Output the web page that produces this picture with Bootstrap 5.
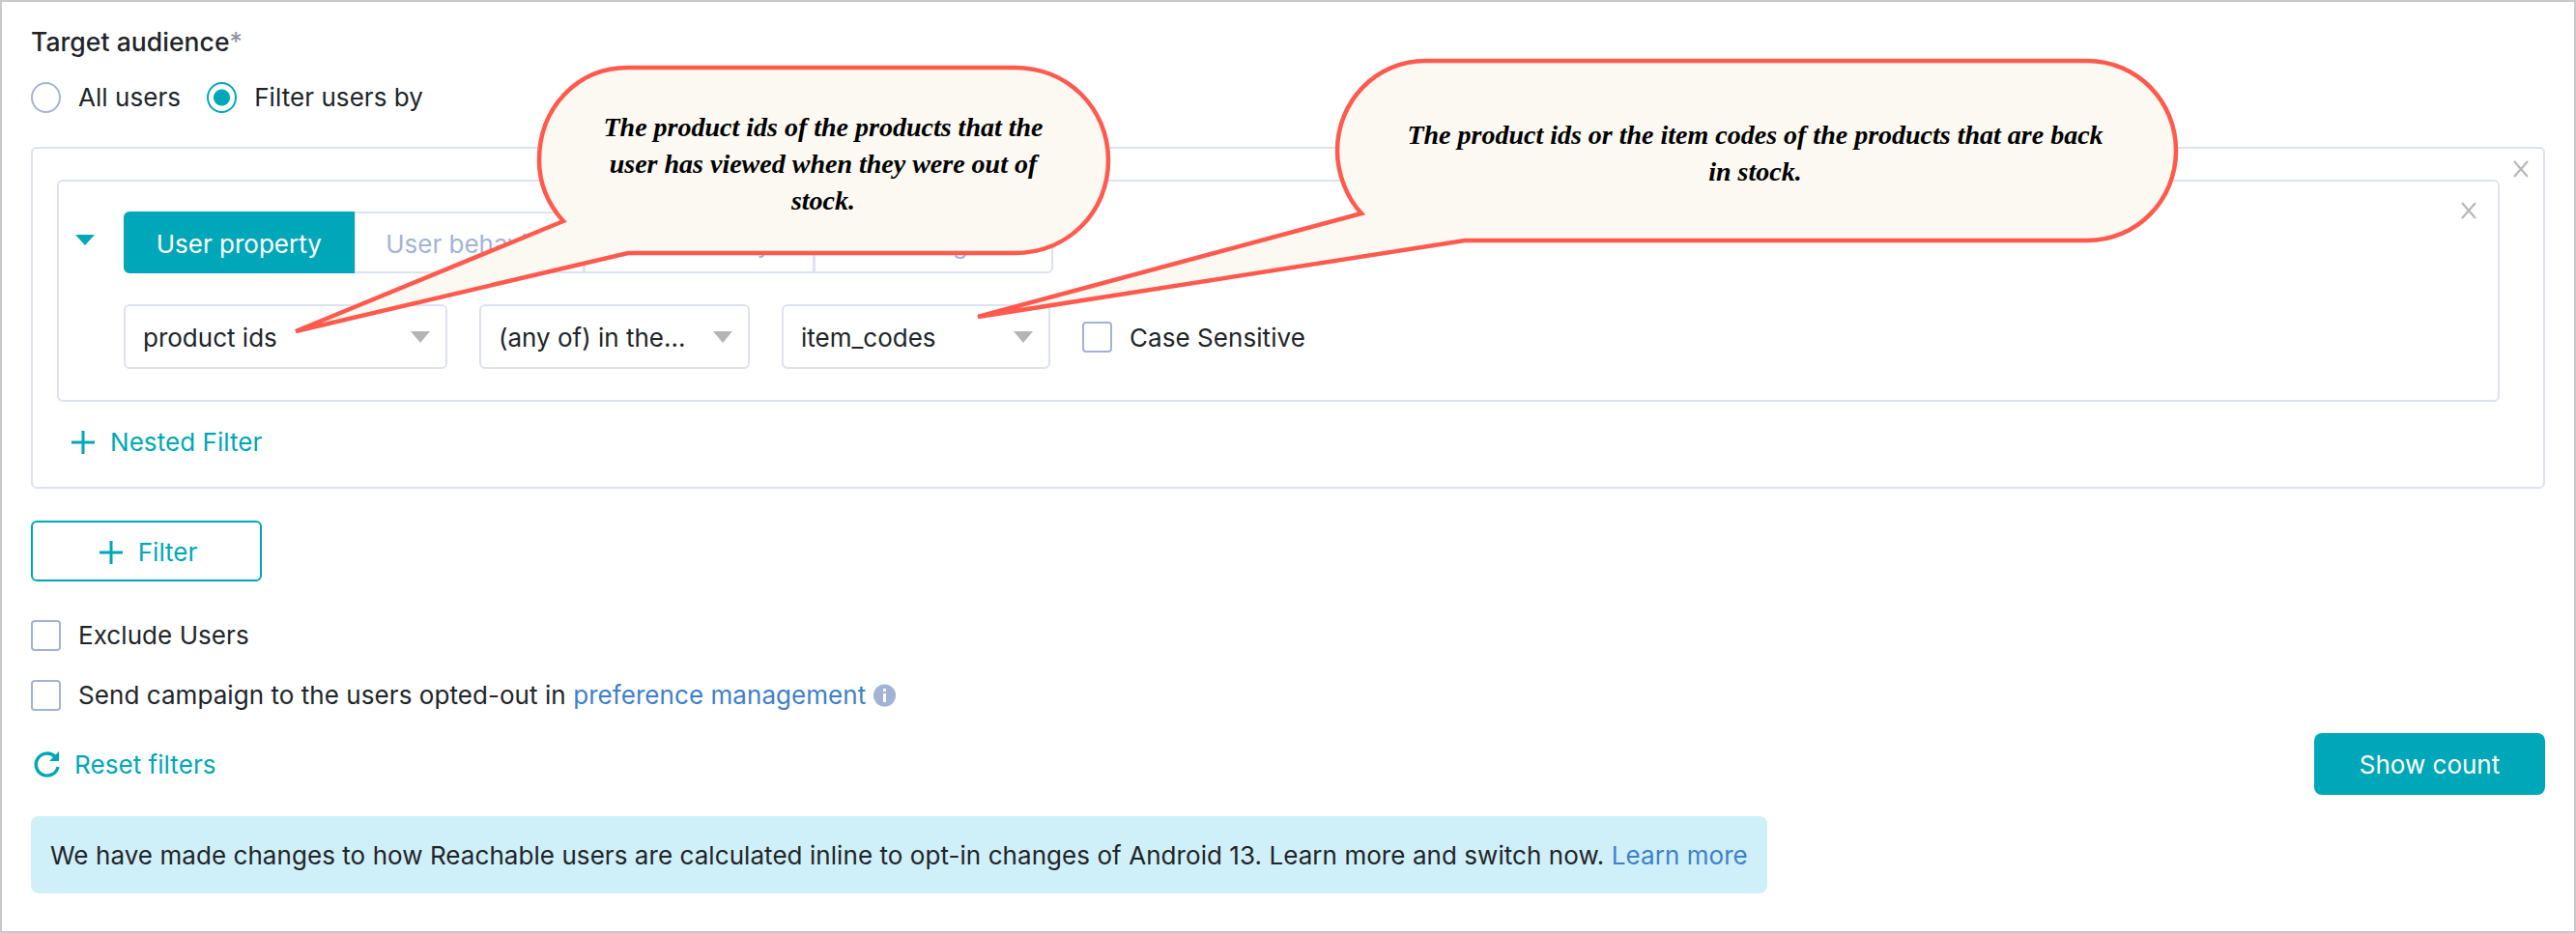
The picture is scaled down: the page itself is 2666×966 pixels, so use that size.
<!DOCTYPE html>
<html lang="en">
  <head>
    <meta charset="utf-8" />
    <meta name="viewport" content="width=device-width, initial-scale=1" />
    <title>Target audience</title>
    <link
      href="https://cdn.jsdelivr.net/npm/bootstrap@5.3.3/dist/css/bootstrap.min.css"
      rel="stylesheet"
    />
    <style>
      body {
        font-family: "Inter", "Liberation Sans", sans-serif;
        font-size: 26px;
        letter-spacing: 0.06px;
        color: #212529;
        background: #fff;
      }
      .page-frame {
        position: relative;
        height: 966px;
        border: 2px solid #c8c8c8;
        padding: 25px 30px 0;
        overflow: hidden;
      }
      .audience-title {
        font-size: 26.5px;
        line-height: 32px;
        font-weight: 500;
      }
      .audience-title span {
        color: #8a8f99;
        font-weight: 400;
      }
      .line-row {
        height: 32px;
        line-height: 32px;
      }
      .all-users-label {
        margin-right: 27px;
      }
      .form-check-input.aud-check {
        width: 31px;
        height: 32px;
        margin: 0 18px 0 0;
        flex: none;
        border: 2px solid #a3b3d6;
        background-color: #fff;
      }
      .form-check-input.aud-check[type="checkbox"] {
        border-radius: 4px;
      }
      .form-check-input.aud-check:checked {
        border-color: #00a7b8;
        background-image: radial-gradient(circle, #00a7b8 0 8px, transparent 9px);
      }
      .filter-box {
        position: relative;
        border: 2px solid #dde1f0;
        border-radius: 6px;
      }
      .filter-outer {
        height: 354px;
        margin-top: 35px;
        padding: 32px 45px 0 25px;
      }
      .filter-inner {
        height: 230px;
        padding: 31px 0 0 67px;
      }
      .close-mark {
        position: absolute;
        width: 18px;
        height: 18px;
      }
      .close-outer {
        top: 12px;
        right: 14px;
      }
      .close-inner {
        top: 21px;
        right: 21px;
      }
      .rule-caret {
        position: absolute;
        left: 17px;
        top: 55px;
        width: 0;
        height: 0;
        border-left: 10px solid transparent;
        border-right: 10px solid transparent;
        border-top: 11px solid #00a7b8;
      }
      .seg-btn {
        height: 64px;
        font-size: 26px;
        color: #a3b3d6;
        border: 2px solid #dde1f0;
        border-radius: 6px;
        background: #fff;
        padding: 2px 0 0;
      }
      .seg-btn.active {
        color: #fff;
        background: #00a7b8;
        border-color: #00a7b8;
      }
      .aud-select {
        height: 67px;
        font-size: 26px;
        color: #212529;
        border: 2px solid #dde1f0;
        border-radius: 6px;
        padding: 2px 10px 0 18px;
        background-image: url("data:image/svg+xml,%3csvg xmlns='http://www.w3.org/2000/svg' viewBox='0 0 20 12'%3e%3cpath fill='%23b4b4b4' d='M0 0h20L10 12z'/%3e%3c/svg%3e");
        background-size: 20px 12px;
        background-position: right 16px center;
      }
      .teal-text {
        color: #00a7b8;
      }
      .nested-link {
        height: 32px;
        margin: 26px 0 0 15px;
        line-height: 32px;
      }
      .plus-mark {
        width: 24px;
        height: 24px;
        flex: none;
      }
      .add-filter {
        width: 239px;
        height: 63px;
        margin-top: 33px;
        padding: 2px 0 0 4px;
        font-size: 26px;
        color: #00a7b8;
        border: 2px solid #00a7b8;
        border-radius: 6px;
      }
      .show-count {
        width: 239px;
        height: 64px;
        font-size: 26px;
        color: #fff;
        background: #00a7b8;
        border: 0;
        border-radius: 8px;
      }
      .reach-note {
        width: 1797px;
        height: 80px;
        margin: 22px 0 0;
        padding: 0 20px;
        font-size: 26px;
        color: #212529;
        background: #d0f0f9;
        border: 0;
        border-radius: 8px;
      }
      .link-blue {
        color: #3f7fca;
        text-decoration: none;
      }
      .call-shapes {
        position: absolute;
        left: -2px;
        top: -2px;
        width: 2666px;
        height: 966px;
        pointer-events: none;
      }
      .call-note {
        position: absolute;
        font-family: "Liberation Serif", serif;
        font-size: 28px;
        font-weight: 700;
        font-style: italic;
        letter-spacing: 0;
        line-height: 38px;
        text-align: center;
        color: #000;
      }
      .call-a {
        left: 605px;
        top: 111px;
        width: 490px;
      }
      .call-b {
        left: 1442px;
        top: 119px;
        width: 745px;
      }
    </style>
  </head>
  <body>
    <div class="page-frame">
      <div class="audience-title">Target audience<span>*</span></div>

      <div class="d-flex align-items-center line-row" style="margin-top: 26px">
        <input class="form-check-input aud-check" type="radio" name="aud" />
        <span class="all-users-label">All users</span>
        <input class="form-check-input aud-check" type="radio" name="aud" checked />
        <span>Filter users by</span>
      </div>

      <div class="filter-box filter-outer">
        <svg class="close-mark close-outer" viewBox="0 0 18 18"><path d="M2 1l14 16M16 1L2 17" stroke="#b5b5b5" stroke-width="2" fill="none" /></svg>
        <div class="filter-box filter-inner">
          <svg class="close-mark close-inner" viewBox="0 0 18 18"><path d="M2 1l14 16M16 1L2 17" stroke="#b5b5b5" stroke-width="2" fill="none" /></svg>
          <div class="rule-caret"></div>
          <div class="btn-group d-flex" style="width: 962px" role="group">
            <button class="btn seg-btn active" style="flex: 238 0 0">User property</button>
            <button class="btn seg-btn" style="flex: 239 0 0">User behavior</button>
            <button class="btn seg-btn" style="flex: 238 0 0">User affinity</button>
            <button class="btn seg-btn" style="flex: 248 0 0">Custom segments</button>
          </div>
          <div class="d-flex align-items-center" style="margin-top: 32px">
            <select class="form-select aud-select" style="width: 335px"><option>product ids</option></select>
            <select class="form-select aud-select" style="width: 280px; margin-left: 33px"><option>(any of) in the...</option></select>
            <select class="form-select aud-select" style="width: 278px; margin-left: 33px"><option>item_codes</option></select>
            <input class="form-check-input aud-check" style="margin-left: 33px" type="checkbox" />
            <span style="padding-top: 2px">Case Sensitive</span>
          </div>
        </div>
        <div class="d-flex align-items-center gap-3 nested-link teal-text">
          <svg class="plus-mark" viewBox="0 0 24 24"><path d="M12 0v24M0 12h24" stroke="#00a7b8" stroke-width="3" /></svg>
          <span>Nested Filter</span>
        </div>
      </div>

      <button class="btn add-filter d-flex align-items-center justify-content-center gap-3">
        <svg class="plus-mark" viewBox="0 0 24 24"><path d="M12 0v24M0 12h24" stroke="#00a7b8" stroke-width="3" /></svg>
        <span>Filter</span>
      </button>

      <div class="d-flex align-items-center line-row" style="margin-top: 40px">
        <input class="form-check-input aud-check" type="checkbox" />
        <span>Exclude Users</span>
      </div>

      <div class="d-flex align-items-center line-row" style="margin-top: 30px">
        <input class="form-check-input aud-check" type="checkbox" />
        <span>Send campaign to the users opted-out in&nbsp;</span>
        <a class="link-blue" href="#">preference management</a>
        <svg class="ms-2" width="23" height="24" viewBox="0 0 23 24">
          <circle cx="11.5" cy="12" r="11.5" fill="#a3b3d6" />
          <rect x="10" y="10" width="3" height="9" fill="#fff" />
          <rect x="10" y="5" width="3" height="3" fill="#fff" />
        </svg>
      </div>

      <div class="d-flex align-items-center justify-content-between" style="margin-top: 23px">
        <div class="d-flex align-items-center teal-text" style="padding-left: 3px">
          <svg width="28" height="28" viewBox="0 0 28 28" fill="none">
            <path d="M22 6.5A11.5 11.5 0 1 0 25 17" stroke="#00a7b8" stroke-width="3.4" />
            <path d="M26 1v10H16z" fill="#00a7b8" />
          </svg>
          <span style="margin-left: 14px">Reset filters</span>
        </div>
        <button class="btn show-count">Show count</button>
      </div>

      <div class="alert reach-note d-flex align-items-center">
        <span>We have made changes to how Reachable users are calculated inline to opt-in changes of Android 13. Learn more and switch now. <a class="link-blue" href="#">Learn more</a></span>
      </div>

      <svg class="call-shapes" viewBox="0 0 2666 966">
        <path d="M650 70H1050C1105 70 1147 112 1147 166C1147 220 1105 262 1050 262H650L306 343L583 229C566 210 558 190 558 166C558 112 597 70 650 70Z" fill="#fbf9f2" stroke="#ff5a4d" stroke-width="4.5" />
        <path d="M1475 63H2160C2212 63 2252 105 2252 156C2252 207 2212 249 2160 249H1516L1012 328L1409 221C1394 205 1384 180 1384 156C1384 105 1424 63 1475 63Z" fill="#fbf9f2" stroke="#ff5a4d" stroke-width="4.5" />
      </svg>
      <div class="call-note call-a">The product ids of the products that the user has viewed when they were out of stock.</div>
      <div class="call-note call-b">The product ids or the item codes of the products that are back in stock.</div>
    </div>

    <script src="https://cdn.jsdelivr.net/npm/bootstrap@5.3.3/dist/js/bootstrap.bundle.min.js"></script>
  </body>
</html>
